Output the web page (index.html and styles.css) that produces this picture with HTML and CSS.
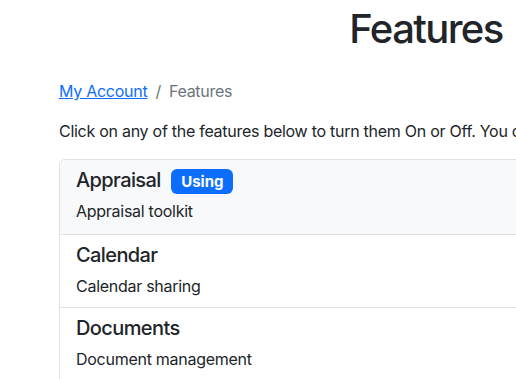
FILE: index.html
```html
<!DOCTYPE html>
<html lang="en">
<head>
    <meta charset="UTF-8">
    <meta name="viewport" content="width=device-width, initial-scale=1.0">
    <title>Features</title>
    <link rel="stylesheet" href="styles.css">
</head>
<body>
    <div class="container">
        <h1 class="page-title">Features</h1>

        <nav class="breadcrumb">
            <a href="#">My Account</a>
            <span class="divider">/</span>
            <span class="current">Features</span>
        </nav>

        <p class="intro">Click on any of the features below to turn them On or Off. You can change these settings at any time.</p>

        <div class="list-group">
            <a href="#" class="list-item active-item">
                <h5>Appraisal <span class="badge">Using</span></h5>
                <p>Appraisal toolkit</p>
            </a>
            <a href="#" class="list-item">
                <h5>Calendar</h5>
                <p>Calendar sharing</p>
            </a>
            <a href="#" class="list-item">
                <h5>Documents</h5>
                <p>Document management</p>
            </a>
            <a href="#" class="list-item">
                <h5>Expenses</h5>
                <p>Expense claims</p>
            </a>
        </div>
    </div>
</body>
</html>
```

FILE: styles.css
```css
body {
    font-family: "Inter", "Liberation Sans", sans-serif;
    font-size: 16px;
    line-height: 1.5;
    letter-spacing: -0.017em;
    color: #212529;
    background: #fff;
    margin: 0;
    overflow: hidden;
}

.container {
    width: 734px;
    padding: 5px 0 0 59px;
}

.page-title {
    font-size: 40px;
    font-weight: 500;
    line-height: 1.2;
    letter-spacing: -0.04em;
    text-align: center;
    margin: 0 0 26px;
}

.breadcrumb {
    display: flex;
    margin-bottom: 16px;
}

.breadcrumb a {
    color: #0d6efd;
}

.breadcrumb .divider {
    color: #6c757d;
    padding: 0 8px;
}

.breadcrumb .current {
    color: #6c757d;
}

.intro {
    margin: 0 0 16px;
    white-space: nowrap;
}

/* Feature list */
.list-group {
    border: 1px solid #dee2e6;
    border-radius: 6px;
}

.list-item {
    display: block;
    padding: 8px 16px 9px;
    color: #212529;
    text-decoration: none;
    border-top: 1px solid #dee2e6;
}

.list-item:first-child {
    border-top: none;
    border-radius: 6px 6px 0 0;
}

.active-item {
    background: #f8f9fa;
}

.list-item h5 {
    font-size: 20px;
    font-weight: 500;
    line-height: 1.2;
    letter-spacing: -0.03em;
    margin: 0 0 7px;
}

.list-item p {
    margin: 0;
}

.badge {
    display: inline-block;
    font-size: 0.75em;
    font-weight: 700;
    line-height: 1;
    letter-spacing: 0;
    color: #fff;
    background: #0d6efd;
    padding: 0.35em 0.65em;
    border-radius: 6px;
    margin-left: 6px;
    vertical-align: baseline;
}

.active-item h5 {
    margin-bottom: 5px;
}

.active-item {
    padding-bottom: 11px;
}
```
